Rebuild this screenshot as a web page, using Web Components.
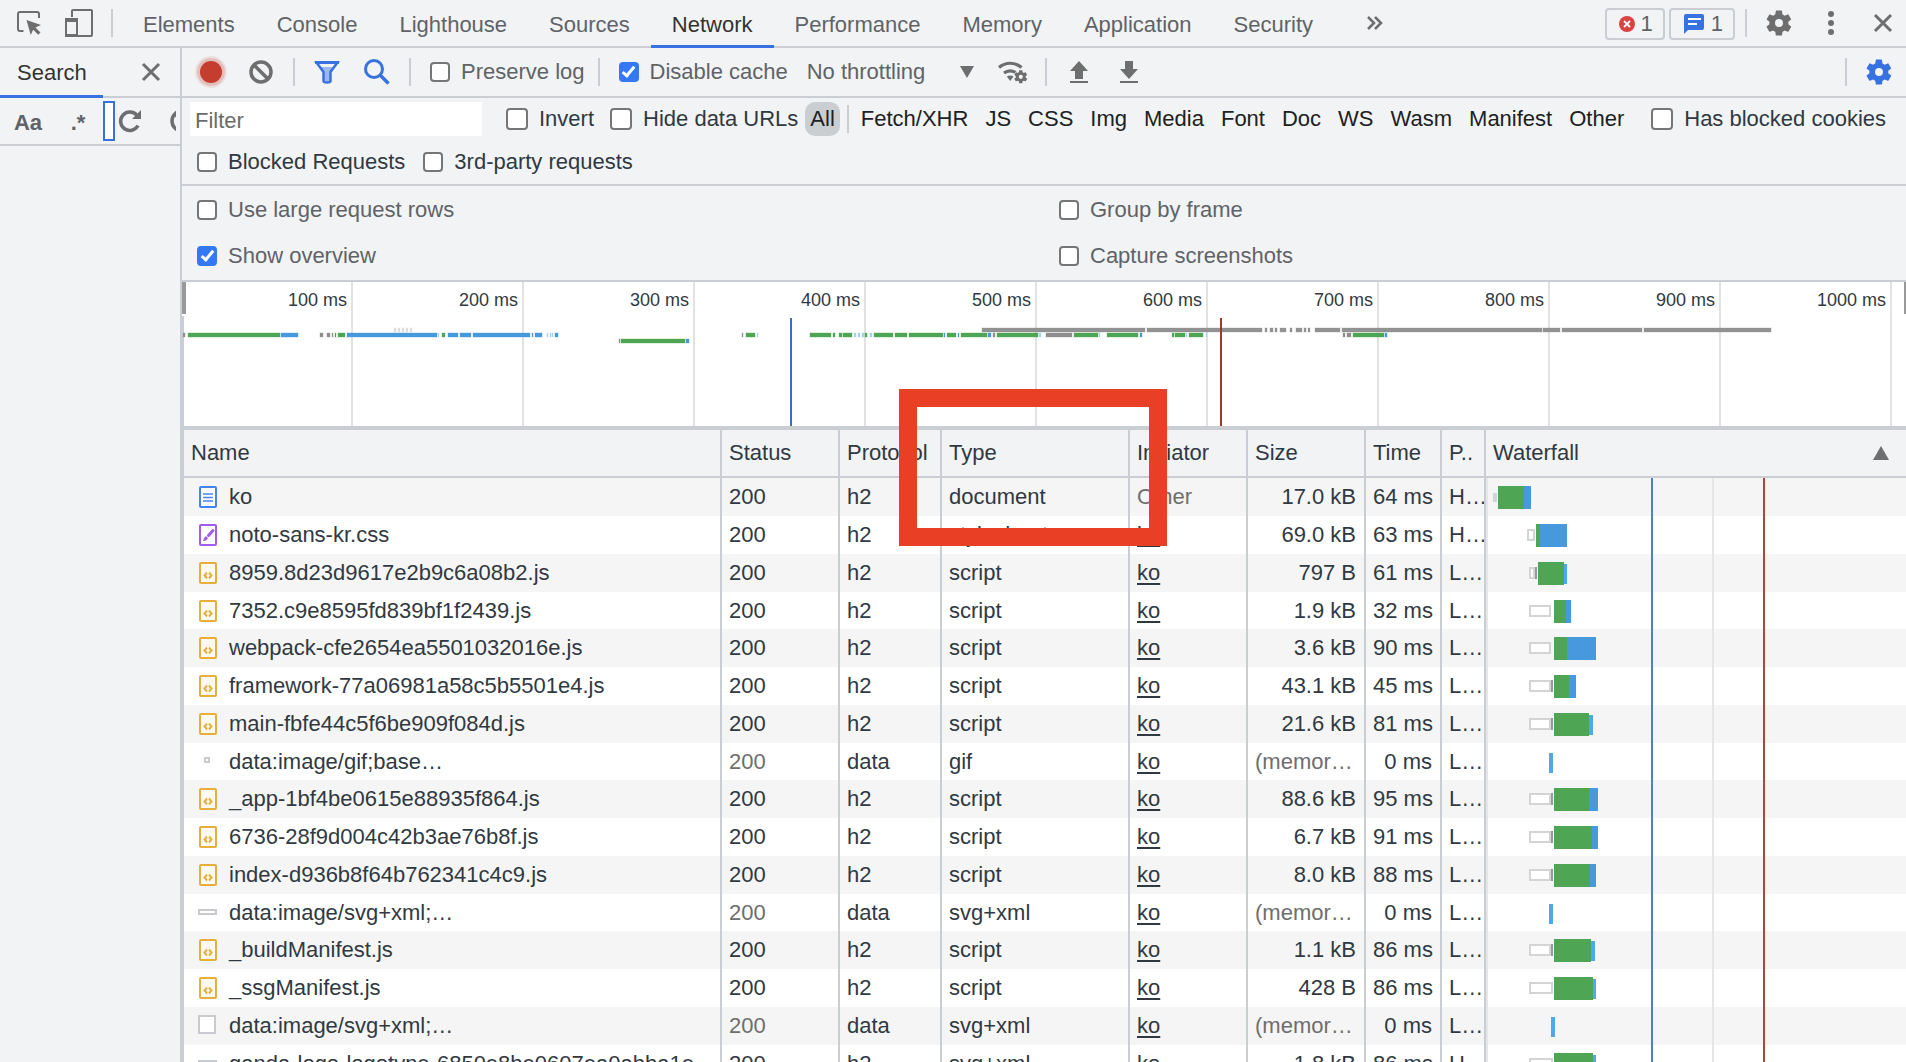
<!DOCTYPE html>
<html lang="en">
<head>
<meta charset="utf-8">
<title>DevTools - Network</title>
<style>
  body {
    margin: 0;
    height: 100vh;
    overflow: hidden;
    font: 22px/26px "Liberation Sans", Arial, sans-serif;
    color: #5f6368;
    background: #f1f3f4;
    --line: #cacdd1;
    --accent: #3871e0;
    --dark: #303942;
  }
</style>
</head>
<body>
<dev-tools></dev-tools>

<script>
const GEAR = `<path d="M19.4 13c0-.3.1-.6.1-1s0-.7-.1-1l2.1-1.6c.2-.2.3-.4.1-.7l-2-3.400c-.1-.2-.4-.3-.6-.2l-2.500 1c-.5-.4-1.100-.7-1.700-1l-.4-2.600c0-.3-.2-.5-.5-.5h-4c-.3 0-.5.2-.5.5l-.4 2.600c-.6.3-1.200.6-1.700 1l-2.500-1c-.2-.1-.5 0-.6.2l-2 3.400c-.1.2-.1.5.1.7L4.400 11c0 .3-.1.6-.1 1s0 .7.1 1l-2.100 1.600c-.2.2-.3.4-.1.7l2 3.400c.1.2.4.3.6.2l2.500-1c.5.4 1.100.7 1.700 1l.4 2.600c0 .3.2.5.5.5h4c.3 0 .5-.2.5-.5l.4-2.600c.6-.3 1.200-.6 1.700-1l2.500 1c.2.1.5 0 .6-.2l2-3.400c.1-.2.1-.5-.1-.7zM12 15.200a3.200 3.200 0 1 1 0-6.400 3.200 3.200 0 0 1 0 6.400z" fill="currentColor" fill-rule="evenodd"/>`;

// name: [width, height, viewBox, content]
const ICONS = {
  inspect: [26, 26, '0 0 26 26', `<path d="M7.500 21H4a2 2 0 0 1-2-2V4a2 2 0 0 1 2-2h17a2 2 0 0 1 2 2v4" fill="none" stroke="currentColor" stroke-width="2"/><path d="M10.500 10l14.500 5-5.500 2.500 5 5-2.300 2.300-5-5-2.500 5.200z" fill="currentColor"/>`],
  device: [28, 28, '0 0 28 28', `<path d="M7 8V2a1 1 0 0 1 1-1h18a1 1 0 0 1 1 1v24a1 1 0 0 1-1 1H12" fill="none" stroke="currentColor" stroke-width="2"/><path d="M1 11h11v16H2a1 1 0 0 1-1-1z" fill="none" stroke="currentColor" stroke-width="2"/><path d="M0 9h13v4H0zM0 25h13v3H0z" fill="currentColor"/>`],
  more: [18, 16, '0 0 18 16', `<path d="M2 2l6 6-6 6M9 2l6 6-6 6" fill="none" stroke="currentColor" stroke-width="2.500"/>`],
  gear: [30, 30, '0 0 24 24', GEAR],
  dots: [8, 26, '0 0 8 26', `<circle cx="4" cy="4" r="3"/><circle cx="4" cy="13" r="3"/><circle cx="4" cy="22" r="3"/>`],
  close: [20, 20, '0 0 20 20', `<path d="M2 2l16 16M18 2L2 18" stroke="currentColor" stroke-width="3"/>`],
  record: [34, 34, '0 0 34 34', `<circle cx="17" cy="17" r="16" fill="#c53d2f" opacity=".1"/><circle cx="17" cy="17" r="14" fill="#c53d2f" opacity=".2"/><circle cx="17" cy="17" r="11" fill="#c53d2f"/>`],
  block: [24, 24, '0 0 24 24', `<circle cx="12" cy="12" r="10" fill="none" stroke="currentColor" stroke-width="3.500"/><path d="M5 5l14 14" stroke="currentColor" stroke-width="3.500"/>`],
  filter: [26, 24, '0 0 26 24', `<path d="M6 7h14l-4 5v10h-6V12z" fill="#9db8ee"/><path d="M2.500 2.500h21L16.500 12v9q0 1.500-3.500 1.500T9.500 21v-9z" fill="none" stroke="currentColor" stroke-width="2.500"/><path d="M1 1h24v3H1z"/>`],
  search: [26, 26, '0 0 26 26', `<circle cx="10" cy="10" r="8.500" fill="none" stroke="currentColor" stroke-width="3"/><path d="M16 16l8.500 8.500" stroke="currentColor" stroke-width="3.500"/>`],
  wifi: [32, 26, '0 0 32 26', `<path d="M2 8.500a17 17 0 0 1 22.500 0" fill="none" stroke="currentColor" stroke-width="3.200"/><path d="M7 14a10 10 0 0 1 12.500 0" fill="none" stroke="currentColor" stroke-width="3.200"/><path d="M9.800 17.500q3.400-2 6.800 0L13.200 22z"/><g transform="translate(16 10) scale(.65)"><circle cx="12" cy="12" r="11" fill="#f1f3f4"/>${GEAR}</g>`],
  upload: [20, 24, '0 0 20 24', `<path d="M10 1l9 10h-5v8H6v-8H1zM1 21h18v2H1z"/>`],
  download: [20, 24, '0 0 20 24', `<path d="M10 19l9-10h-5V1H6v8H1zM1 21h18v2H1z"/>`],
  reload: [24, 24, '0 0 24 24', `<path d="M20 16.500a9.200 9.200 0 1 1-1-10" fill="none" stroke="currentColor" stroke-width="3.500"/><path d="M23 1v9h-9z"/>`],
  down: [14, 12, '0 0 14 12', `<path d="M0 0h14L7 12z"/>`],
  up: [16, 14, '0 0 16 14', `<path d="M8 0l8 14H0z"/>`],
  error: [16, 16, '0 0 16 16', `<circle cx="8" cy="8" r="8" fill="#d64541"/><path d="M5 5l6 6M11 5l-6 6" stroke="#fff" stroke-width="1.800"/>`],
  message: [22, 20, '0 0 22 20', `<path d="M3 0h16q2 0 2 2v12q0 2-2 2H5l-4 4V2q0-2 2-2z"/><path d="M5 5h13M5 10h9" stroke="#fff" stroke-width="2"/>`],
  doc: [18, 22, '0 0 18 22', `<rect x="1" y="1" width="16" height="20" rx="1" fill="#fff" stroke="#4583f5" stroke-width="2"/><path d="M4 8h10M4 11.500h10M4 15h10" stroke="#4583f5" stroke-width="1.500"/>`],
  css: [18, 22, '0 0 18 22', `<rect x="1" y="1" width="16" height="20" rx="1" fill="#fff" stroke="#a25cf5" stroke-width="2"/><path d="M14 6.500L9.500 11.500" stroke="#a25cf5" stroke-width="3" stroke-linecap="round"/><path d="M7 12l2 2q-1.500 3.500-5 3 1-4 3-5z" fill="#a25cf5"/>`],
  js: [18, 22, '0 0 18 22', `<rect x="1" y="1" width="16" height="20" rx="1" fill="#fefaf2" stroke="#e8ae3d" stroke-width="2"/><path d="M8 10.500L5.500 13.500 8 16.500M10 10.500l2.500 3-2.500 3" fill="none" stroke="#e8ae3d" stroke-width="2"/>`],
  tiny: [18, 22, '0 0 18 22', `<rect x="6" y="7" width="4" height="4" fill="#fff" stroke="#c8cacf" stroke-width="2"/>`],
  wide: [18, 22, '0 0 18 22', `<rect x="0" y="8" width="17" height="4" fill="#fff" stroke="#c8cacf" stroke-width="2"/>`],
  square: [18, 22, '0 0 18 22', `<rect x="0" y="1" width="16" height="17" fill="#fff" stroke="#c8cacf" stroke-width="2"/>`],
};

class ToolIcon extends HTMLElement {
  connectedCallback() {
    const [w, h, box, body] = ICONS[this.getAttribute('name')];
    this.attachShadow({ mode: 'open' }).innerHTML = `
      <style>
        :host { display: inline-flex; flex: none; }
        svg { display: block; fill: currentColor; overflow: visible; }
      </style>
      <svg width="${w}" height="${h}" viewBox="${box}" aria-hidden="true">${body}</svg>
    `;
  }
}
customElements.define('tool-icon', ToolIcon);

class IconButton extends HTMLElement {
  connectedCallback() {
    this.attachShadow({ mode: 'open' }).innerHTML = `
      <style>
        :host { display: flex; flex: none; color: #6e6e6e; }
        :host([active]) { color: var(--accent); }
        button {
          display: flex; align-items: center; justify-content: center;
          width: 50px; height: 46px; padding: 0; border: 0;
          background: none; color: inherit; font: inherit;
        }
      </style>
      <button aria-label="${this.getAttribute('label')}"><tool-icon name="${this.getAttribute('icon')}"></tool-icon></button>
    `;
  }
}
customElements.define('icon-button', IconButton);

class BarDivider extends HTMLElement {
  connectedCallback() {
    this.attachShadow({ mode: 'open' }).innerHTML = `
      <style>:host { display: block; flex: none; width: 2px; height: 28px; margin: 0 7px; background: var(--line); }</style>
    `;
  }
}
customElements.define('bar-divider', BarDivider);

class CheckBox extends HTMLElement {
  connectedCallback() {
    this.attachShadow({ mode: 'open' }).innerHTML = `
      <style>
        :host { display: block; flex: none; }
        label { display: flex; align-items: center; gap: 11px; white-space: nowrap; }
        input {
          appearance: none; box-sizing: border-box; flex: none;
          width: var(--box, 20px); height: var(--box, 20px); margin: 0;
          border: 2px solid #767676; border-radius: 4px; background: #fff;
        }
        input:checked { display: grid; place-items: center; border-color: #3478f6; background: #3478f6; }
        input:checked::before {
          content: ""; width: 4px; height: 10px; margin-bottom: 3px;
          border: solid #fff; border-width: 0 3px 3px 0; transform: rotate(40deg);
        }
      </style>
      <label><input type="checkbox" ${this.hasAttribute('checked') ? 'checked' : ''}><slot></slot></label>
    `;
  }
}
customElements.define('check-box', CheckBox);

class TabBar extends HTMLElement {
  connectedCallback() {
    const tabs = ['Elements', 'Console', 'Lighthouse', 'Sources', 'Network', 'Performance', 'Memory', 'Application', 'Security'];
    this.attachShadow({ mode: 'open' }).innerHTML = `
      <style>
        :host { display: flex; align-items: center; height: 46px; padding-left: 4px; border-bottom: 2px solid var(--line); }
        nav { display: flex; margin: 0 16px 0 2px; }
        nav button {
          height: 48px; margin-bottom: -2px; padding: 5px 21px 0; border: 0;
          border-bottom: 3px solid transparent; background: none; color: inherit; font: inherit;
        }
        nav button.current { color: #333; border-color: var(--accent); }
        .badges { display: flex; gap: 4px; margin: 2px 3px 0 auto; }
        .badges button {
          display: flex; align-items: center; gap: 6px; height: 32px; padding: 0 10px 0 12px;
          border: 2px solid var(--line); border-radius: 4px; background: none; color: inherit; font: inherit;
        }
        .badges .message { color: var(--accent); }
        .actions { display: flex; gap: 2px; margin-right: -2px; }
      </style>
      <icon-button icon="inspect" label="Inspect"></icon-button>
      <icon-button icon="device" label="Device toolbar"></icon-button>
      <bar-divider></bar-divider>
      <nav>${tabs.map(t => `<button class="${t === 'Network' ? 'current' : ''}">${t}</button>`).join('')}</nav>
      <icon-button icon="more" label="More tabs"></icon-button>
      <div class="badges">
        <button><tool-icon name="error"></tool-icon>1</button>
        <button><tool-icon class="message" name="message"></tool-icon>1</button>
      </div>
      <bar-divider></bar-divider>
      <div class="actions">
        <icon-button icon="gear" label="Settings"></icon-button>
        <icon-button icon="dots" label="Menu"></icon-button>
        <icon-button icon="close" label="Close"></icon-button>
      </div>
    `;
  }
}
customElements.define('tab-bar', TabBar);

class SearchPanel extends HTMLElement {
  connectedCallback() {
    this.attachShadow({ mode: 'open' }).innerHTML = `
      <style>
        :host { display: block; flex: none; box-sizing: border-box; width: 182px; border-right: 2px solid var(--line); }
        header { display: flex; align-items: center; justify-content: space-between; height: 48px; border-bottom: 2px solid var(--line); }
        .title {
          height: 50px; margin-bottom: -2px; padding: 3px 16px 0 17px; border: 0; border-bottom: 3px solid var(--accent);
          background: none; color: #333; font: inherit;
        }
        icon-button { margin-right: 4px; }
        .tools { display: flex; align-items: center; height: 46px; padding: 0 4px 0 3px; border-bottom: 2px solid var(--line); }
        .clip { display: flex; align-items: center; overflow: hidden; color: #6e6e6e; }
        .clip button { width: 50px; flex: none; padding: 4px 0 0; border: 0; background: none; color: #5f6368; font: inherit; font-weight: bold; }
        input { box-sizing: border-box; flex: none; width: 12px; height: 40px; padding: 0; border: 2px solid var(--accent); background: #fff; }
        .reload { margin: 0 28px 0 3px; }
      </style>
      <header>
        <button class="title">Search</button>
        <icon-button icon="close" label="Close search"></icon-button>
      </header>
      <div class="tools">
        <div class="clip">
          <button>Aa</button>
          <button>.*</button>
          <input type="text" aria-label="Search">
          <tool-icon class="reload" name="reload"></tool-icon>
          <tool-icon name="block"></tool-icon>
        </div>
      </div>
    `;
  }
}
customElements.define('search-panel', SearchPanel);

class NetworkToolbar extends HTMLElement {
  connectedCallback() {
    this.attachShadow({ mode: 'open' }).innerHTML = `
      <style>
        :host { display: flex; align-items: center; height: 48px; padding: 0 2px 0 4px; border-bottom: 2px solid var(--line); }
        check-box { margin: 0 6px 0 12px; }
        .throttle { display: grid; align-items: center; width: 180px; margin-right: 14px; color: #6e6e6e; }
        .throttle > * { grid-area: 1 / 1; }
        .throttle tool-icon { justify-self: end; pointer-events: none; }
        select { appearance: none; width: 100%; padding: 0 0 0 13px; border: 0; background: none; color: #5f6368; font: inherit; }
        .end { display: flex; align-items: center; margin-left: auto; }
      </style>
      <icon-button icon="record" label="Record"></icon-button>
      <icon-button icon="block" label="Clear"></icon-button>
      <bar-divider></bar-divider>
      <icon-button active icon="filter" label="Filter"></icon-button>
      <icon-button active icon="search" label="Search"></icon-button>
      <bar-divider></bar-divider>
      <check-box>Preserve log</check-box>
      <bar-divider></bar-divider>
      <check-box checked>Disable cache</check-box>
      <div class="throttle">
        <select aria-label="Throttling"><option>No throttling</option></select>
        <tool-icon name="down"></tool-icon>
      </div>
      <icon-button icon="wifi" label="Network conditions"></icon-button>
      <bar-divider></bar-divider>
      <icon-button icon="upload" label="Import HAR"></icon-button>
      <icon-button icon="download" label="Export HAR"></icon-button>
      <div class="end">
        <bar-divider></bar-divider>
        <icon-button active icon="gear" label="Network settings"></icon-button>
      </div>
    `;
  }
}
customElements.define('network-toolbar', NetworkToolbar);

class FilterBar extends HTMLElement {
  connectedCallback() {
    const types = ['Fetch/XHR', 'JS', 'CSS', 'Img', 'Media', 'Font', 'Doc', 'WS', 'Wasm', 'Manifest', 'Other'];
    this.attachShadow({ mode: 'open' }).innerHTML = `
      <style>
        :host { display: grid; gap: 9px; padding: 4px 8px 5px; border-bottom: 2px solid var(--line); color: var(--dark); }
        .row { display: flex; align-items: center; height: 34px; }
        .first { --box: 22px; }
        .second { gap: 18px; padding-left: 7px; }
        input { box-sizing: border-box; width: 292px; height: 34px; margin-right: 24px; padding: 4px 5px 0; border: 0; background: #fff; font: inherit; }
        input::placeholder { color: #6b6b6b; }
        .types { display: flex; align-items: center; gap: 7px; margin: 0 22px 0 7px; }
        .types button { height: 34px; padding: 0 5px; border: 0; border-radius: 10px; background: none; color: #202124; font: inherit; }
        .types .current { background: #cbced1; }
        .types bar-divider { margin: 0; }
        .invert { margin-right: 16px; }
      </style>
      <div class="row first">
        <input type="text" placeholder="Filter" aria-label="Filter">
        <check-box class="invert">Invert</check-box>
        <check-box>Hide data URLs</check-box>
        <div class="types">
          <button class="current">All</button>
          <bar-divider></bar-divider>
          ${types.map(t => `<button>${t}</button>`).join('')}
        </div>
        <check-box>Has blocked cookies</check-box>
      </div>
      <div class="row second">
        <check-box>Blocked Requests</check-box>
        <check-box>3rd-party requests</check-box>
      </div>
    `;
  }
}
customElements.define('filter-bar', FilterBar);

class SettingsPane extends HTMLElement {
  connectedCallback() {
    this.attachShadow({ mode: 'open' }).innerHTML = `
      <style>
        :host {
          display: grid; grid-template: 46px 46px / 1fr 1fr; align-items: center;
          padding: 1px 0; border-bottom: 2px solid var(--line);
        }
        check-box { margin-left: 15px; }
      </style>
      <check-box>Use large request rows</check-box>
      <check-box>Group by frame</check-box>
      <check-box checked>Show overview</check-box>
      <check-box>Capture screenshots</check-box>
    `;
  }
}
customElements.define('settings-pane', SettingsPane);

// colour, then from-to pairs in chart units
const LANES = [
  { y: 46, bars: {
    '#dedede': '212-214 216-218 220-222 224-226 228-230',
    '#929292': '800-963 965-1080 1083-1085 1088-1091 1093-1095 1098-1104 1108-1110 1114-1120 1122-1124 1126-1128 1133-1158 1160-1360 1361-1378 1380-1460 1462-1589',
  } },
  { y: 51, bars: {
    '#8e8e8e': '1-3 138-141 145-148 150-151 560-561 811-813 864-890 1161-1163 1165-1169',
    '#4ea554': '6-98 153-154 156-163 260-263 564-573 628-649 651-653 657-660 661-670 683-685 692-711 713-725 727-761 765-774 779-805 815-856 892-916 925-956 990-992 993-1003 1007-1021 1171-1202',
    '#4799dd': '99-116 165-255 266-276 278-289 291-348 350-351 353-360 373-376 762-763 776-777 806-809 958-960 1203-1205',
    '#a5d2f2': '256-257 365-366 368-369 370-371 575-576 672-674 676-678 680-682 688-690 857-859 917-918 1004-1005 1024-1025',
  } },
  { y: 57, bars: {
    '#8e8e8e': '437-438',
    '#4ea554': '439-503',
    '#4799dd': '504-507',
  } },
];

class TimeOverview extends HTMLElement {
  connectedCallback() {
    const bars = LANES.map(lane => Object.entries(lane.bars).map(([color, spans]) =>
      spans.split(' ').map(span => {
        const [from, to] = span.split('-').map(Number);
        return `<rect x="${from}" y="${lane.y}" width="${to - from}" height="4" fill="${color}" stroke="${color}" stroke-opacity=".35"/>`;
      }).join('')).join('')).join('');
    let labels = '';
    for (let ms = 100; ms <= 1000; ms += 100) labels += `<span>${ms} ms</span>`;
    this.attachShadow({ mode: 'open' }).innerHTML = `
      <style>
        :host { display: grid; height: 144px; border-bottom: 4px solid var(--line); background: #fff; overflow: hidden; }
        .scale { display: grid; grid-template-columns: repeat(10, 171fr) 14fr; grid-area: 1 / 1; }
        span { padding: 5px 4px 0 0; border-right: 2px solid #e2e2e2; color: var(--dark); font-size: 18px; text-align: right; white-space: nowrap; }
        svg { grid-area: 1 / 1; display: block; width: 100%; height: 144px; }
      </style>
      <div class="scale">${labels}</div>
      <svg viewBox="0 0 1724 144" preserveAspectRatio="none">
        <path d="M0 0h4v32H0zM1722 0h2v32h-2z" fill="#999"/>
        <path d="M0 34h2v110H0z" fill="#c6cee0"/>
        ${bars}
        <path d="M608 36h2v108h-2z" fill="#3a6cc4"/>
        <path d="M1038 36h2v108h-2z" fill="#a5352f"/>
      </svg>
    `;
  }
}
customElements.define('time-overview', TimeOverview);

// q = queued box, s = stalled, g = waiting, b = download, t = short download, p = pending
const SHAPES = {
  p: { y: 15, h: 9, fill: '#d4d4d4' },
  s: { y: 13, h: 12, fill: '#999' },
  g: { y: 8, h: 23, fill: '#4ea554' },
  b: { y: 8, h: 23, fill: '#4799dd' },
  t: { y: 10, h: 20, fill: '#50a8ec' },
};

class WaterfallBars extends HTMLElement {
  connectedCallback() {
    const shapes = this.getAttribute('bars').split(' ').map(bar => {
      const kind = bar[0];
      const [from, to] = bar.slice(1).split('-').map(Number);
      if (kind === 'q') return `<rect x="${from + 1}" y="14" width="${to - from - 2}" height="10" fill="#fff" stroke="#d4d4d4" stroke-width="2"/>`;
      const s = SHAPES[kind];
      return `<rect x="${from}" y="${s.y}" width="${to - from}" height="${s.h}" fill="${s.fill}"/>`;
    }).join('');
    this.attachShadow({ mode: 'open' }).innerHTML = `
      <style>
        :host { display: block; }
        svg { display: block; width: 100%; height: 36px; overflow: visible; }
      </style>
      <svg aria-hidden="true">
        <path d="M0 0h2v38H0zM226 0h2v38h-2z" fill="#e6e6e6"/>
        <path d="M165 0h2v38h-2z" fill="#4a80cc"/>
        <path d="M277 0h2v38h-2z" fill="#b0443f"/>
        ${shapes}
      </svg>
    `;
  }
}
customElements.define('waterfall-bars', WaterfallBars);

// icon, name, protocol, type, size, time, priority, waterfall
const REQUESTS = [
  ['doc', 'ko', 'h2', 'document', '17.0 kB', '64 ms', 'H', 'p7-11 g12-38 b38-45'],
  ['css', 'noto-sans-kr.css', 'h2', 'stylesheet', '69.0 kB', '63 ms', 'H', 'q41-49 g50-54 b54-81'],
  ['js', '8959.8d23d9617e2b9c6a08b2.js', 'h2', 'script', '797 B', '61 ms', 'L', 'q43-49 s49-51 g52-78 t78-81'],
  ['js', '7352.c9e8595fd839bf1f2439.js', 'h2', 'script', '1.9 kB', '32 ms', 'L', 'q43-65 g68-80 b80-85'],
  ['js', 'webpack-cfe2654ea5501032016e.js', 'h2', 'script', '3.6 kB', '90 ms', 'L', 'q43-65 g68-81 b81-110'],
  ['js', 'framework-77a06981a58c5b5501e4.js', 'h2', 'script', '43.1 kB', '45 ms', 'L', 'q43-65 s65-67 g68-83 b83-90'],
  ['js', 'main-fbfe44c5f6be909f084d.js', 'h2', 'script', '21.6 kB', '81 ms', 'L', 'q43-65 s65-67 g68-103 t103-107'],
  ['tiny', 'data:image/gif;base…', 'data', 'gif', '(memor…', '0 ms', 'L', 't63-67'],
  ['js', '_app-1bf4be0615e88935f864.js', 'h2', 'script', '88.6 kB', '95 ms', 'L', 'q43-65 s65-67 g68-103 b103-112'],
  ['js', '6736-28f9d004c42b3ae76b8f.js', 'h2', 'script', '6.7 kB', '91 ms', 'L', 'q43-65 s65-67 g68-106 b106-112'],
  ['js', 'index-d936b8f64b762341c4c9.js', 'h2', 'script', '8.0 kB', '88 ms', 'L', 'q43-65 s65-67 g68-104 b104-110'],
  ['wide', 'data:image/svg+xml;…', 'data', 'svg+xml', '(memor…', '0 ms', 'L', 't63-67'],
  ['js', '_buildManifest.js', 'h2', 'script', '1.1 kB', '86 ms', 'L', 'q43-65 s65-67 g68-105 t105-109'],
  ['js', '_ssgManifest.js', 'h2', 'script', '428 B', '86 ms', 'L', 'q43-67 g68-107 t107-110'],
  ['square', 'data:image/svg+xml;…', 'data', 'svg+xml', '(memor…', '0 ms', 'L', 't65-69'],
  ['wide', 'ganda-logo-logotype-6850e8be0607ea0abba1e…', 'h2', 'svg+xml', '1.8 kB', '86 ms', 'H', 'q43-67 g68-107 t107-110'],
];

class RequestTable extends HTMLElement {
  connectedCallback() {
    const rows = REQUESTS.map(([icon, name, protocol, type, size, time, priority, bars], i) => {
      const cached = protocol === 'data';
      return `
        <tr>
          <td><div class="name"><tool-icon name="${icon}"></tool-icon>${name}</div></td>
          <td class="${cached ? 'dim' : ''}">200</td>
          <td>${protocol}</td>
          <td>${type}</td>
          <td class="${i ? '' : 'dim'}">${i ? '<a href="#">ko</a>' : 'Other'}</td>
          <td class="${cached ? 'dim' : 'num'}">${size}</td>
          <td class="num">${time}</td>
          <td class="priority">${priority}…</td>
          <td class="chart"><waterfall-bars bars="${bars}"></waterfall-bars></td>
        </tr>`;
    }).join('');
    this.attachShadow({ mode: 'open' }).innerHTML = `
      <style>
        :host { display: block; flex: 1; min-height: 0; overflow: hidden; border-left: 2px solid var(--line); background: #fff; color: var(--dark); }
        table { width: 100%; table-layout: fixed; border-collapse: separate; border-spacing: 0; }
        th, td {
          box-sizing: border-box; padding: 0 8px 0 7px; border-right: 2px solid var(--line);
          overflow: hidden; font-weight: normal; text-align: left; white-space: nowrap;
        }
        th:last-child, td:last-child { border-right: 0; }
        th { height: 48px; border-bottom: 2px solid var(--line); background: #f1f3f4; }
        td { height: 38px; }
        tr:nth-child(4n) td { height: 37px; }
        tbody tr:nth-child(odd) { background: #f5f5f5; }
        td.num { text-align: right; }
        td.priority { padding-right: 0; }
        .dim { color: #6e6e6e; }
        td.chart { padding: 0; vertical-align: top; }
        .name { display: flex; align-items: center; gap: 12px; padding-left: 8px; }
        .sort { display: flex; align-items: center; justify-content: space-between; padding-right: 9px; }
        .sort tool-icon { color: #6e6e6e; }
        a { color: inherit; text-underline-offset: 3px; text-decoration-thickness: 2px; }
      </style>
      <table>
        <colgroup>
          <col style="width: 538px"><col style="width: 118px"><col style="width: 102px">
          <col style="width: 188px"><col style="width: 118px"><col style="width: 118px">
          <col style="width: 76px"><col style="width: 44px"><col>
        </colgroup>
        <thead>
          <tr>
            <th>Name</th><th>Status</th><th>Protocol</th><th>Type</th><th>Initiator</th>
            <th>Size</th><th>Time</th><th>P..</th>
            <th><div class="sort">Waterfall<tool-icon name="up"></tool-icon></div></th>
          </tr>
        </thead>
        <tbody>${rows}</tbody>
      </table>
    `;
  }
}
customElements.define('request-table', RequestTable);

class DevTools extends HTMLElement {
  connectedCallback() {
    this.attachShadow({ mode: 'open' }).innerHTML = `
      <style>
        :host { display: flex; flex-direction: column; position: relative; height: 100%; }
        .body { display: flex; flex: 1; min-height: 0; }
        main { display: flex; flex-direction: column; flex: 1; min-width: 0; }
        /* red frame drawn over the Type column */
        .mark {
          position: absolute; left: 899px; top: 389px; box-sizing: border-box;
          width: 268px; height: 157px; border: 18px solid #e93f25; pointer-events: none;
        }
      </style>
      <tab-bar></tab-bar>
      <div class="body">
        <search-panel></search-panel>
        <main>
          <network-toolbar></network-toolbar>
          <filter-bar></filter-bar>
          <settings-pane></settings-pane>
          <time-overview></time-overview>
          <request-table></request-table>
        </main>
      </div>
      <div class="mark"></div>
    `;
  }
}
customElements.define('dev-tools', DevTools);
</script>
</body>
</html>
